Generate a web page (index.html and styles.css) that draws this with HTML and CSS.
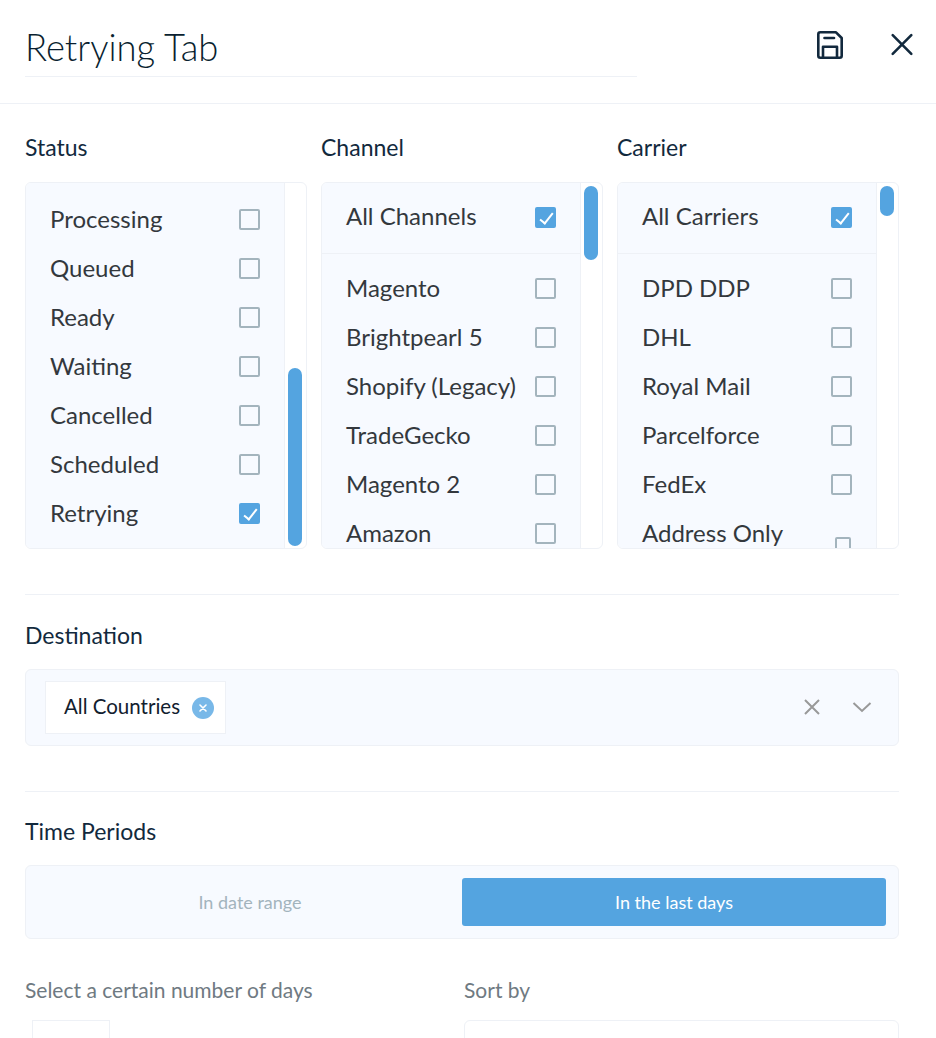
FILE: index.html
```html
<!DOCTYPE html>
<html lang="en">
<head>
<meta charset="UTF-8">
<meta name="viewport" content="width=device-width, initial-scale=1.0">
<title>Retrying Tab</title>
<link rel="stylesheet" href="styles.css">
</head>
<body>
<!-- Title bar -->
<header class="top-bar">
    <div class="title-field">Retrying Tab</div>
    <button class="icon-button save-button" aria-label="Save">
        <svg width="32" height="32" viewBox="0 0 32 32" fill="none" stroke="#12293d" stroke-width="2.6" stroke-linejoin="round" stroke-linecap="round">
            <path d="M4.300 5.300a2 2 0 0 1 2-2h15.700l5.700 5.700v17.700a2 2 0 0 1-2 2h-19.400a2 2 0 0 1-2-2z"/>
            <path d="M9 28.700v-11h14v11"/>
            <path d="M10.500 9h9.500"/>
        </svg>
    </button>
    <button class="icon-button close-button" aria-label="Close">
        <svg width="24" height="24" viewBox="0 0 24 24" fill="none" stroke="#12293d" stroke-width="2.600" stroke-linecap="round">
            <path d="M2.700 2.200l18.600 18.600M21.300 2.200l-18.600 18.600"/>
        </svg>
    </button>
</header>

<main class="content">
    <!-- Three filter lists -->
    <section class="filters">
        <div class="filter">
            <h2 class="label">Status</h2>
            <div class="list-box">
                <div class="list plain">
                    <div class="row"><span>Processing</span><i class="check"></i></div>
                    <div class="row"><span>Queued</span><i class="check"></i></div>
                    <div class="row"><span>Ready</span><i class="check"></i></div>
                    <div class="row"><span>Waiting</span><i class="check"></i></div>
                    <div class="row"><span>Cancelled</span><i class="check"></i></div>
                    <div class="row"><span>Scheduled</span><i class="check"></i></div>
                    <div class="row"><span>Retrying</span><i class="check on"></i></div>
                </div>
                <div class="track"><div class="thumb thumb-status"></div></div>
            </div>
        </div>
        <div class="filter">
            <h2 class="label">Channel</h2>
            <div class="list-box">
                <div class="list">
                    <div class="row all-row"><span>All Channels</span><i class="check on"></i></div>
                    <div class="row-group">
                        <div class="row"><span>Magento</span><i class="check"></i></div>
                        <div class="row"><span>Brightpearl 5</span><i class="check"></i></div>
                        <div class="row"><span>Shopify (Legacy)</span><i class="check"></i></div>
                        <div class="row"><span>TradeGecko</span><i class="check"></i></div>
                        <div class="row"><span>Magento 2</span><i class="check"></i></div>
                        <div class="row"><span>Amazon</span><i class="check"></i></div>
                    </div>
                </div>
                <div class="track"><div class="thumb thumb-channel"></div></div>
            </div>
        </div>
        <div class="filter">
            <h2 class="label">Carrier</h2>
            <div class="list-box">
                <div class="list">
                    <div class="row all-row"><span>All Carriers</span><i class="check on"></i></div>
                    <div class="row-group">
                        <div class="row"><span>DPD DDP</span><i class="check"></i></div>
                        <div class="row"><span>DHL</span><i class="check"></i></div>
                        <div class="row"><span>Royal Mail</span><i class="check"></i></div>
                        <div class="row"><span>Parcelforce</span><i class="check"></i></div>
                        <div class="row"><span>FedEx</span><i class="check"></i></div>
                        <div class="row"><span>Address Only</span><i class="check small"></i></div>
                    </div>
                </div>
                <div class="track"><div class="thumb thumb-carrier"></div></div>
            </div>
        </div>
    </section>

    <!-- Destination -->
    <section class="block block-destination">
        <h2 class="label">Destination</h2>
        <div class="select-box">
            <div class="tag">
                <span class="tag-text">All Countries</span>
                <span class="tag-remove">
                    <svg width="8" height="8" viewBox="0 0 8 8" fill="none" stroke="#fff" stroke-width="1.600" stroke-linecap="round"><path d="M1 1l6 6M7 1l-6 6"/></svg>
                </span>
            </div>
            <div class="select-icons">
                <svg width="18" height="18" viewBox="0 0 18 18" fill="none" stroke="#999" stroke-width="2"><path d="M2 2l14 14M16 2l-14 14"/></svg>
                <svg width="20" height="12" viewBox="0 0 20 12" fill="none" stroke="#999" stroke-width="2"><path d="M1.500 2l8.500 8 8.500-8"/></svg>
            </div>
        </div>
    </section>

    <!-- Time periods -->
    <section class="block block-time">
        <h2 class="label">Time Periods</h2>
        <div class="toggle">
            <div class="toggle-option">In date range</div>
            <div class="toggle-option active">In the last days</div>
        </div>
        <div class="bottom-fields">
            <div class="field-days">
                <div class="field-label">Select a certain number of days</div>
                <div class="days-input"></div>
            </div>
            <div class="field-sort">
                <div class="field-label">Sort by</div>
                <div class="sort-input"></div>
            </div>
        </div>
    </section>
</main>
</body>
</html>
```

FILE: styles.css
```css
/* Page */
html, body {
    height: 1038px;
    overflow: hidden;
}
body {
    background-color: #fff;
    color: #12293d;
    font-family: "Lato", "Open Sans", sans-serif;
    margin: 0;
    padding: 0;
}
/* Title bar */
.top-bar {
    height: 103px;
    border-bottom: 1px solid #eef1f6;
    display: flex;
    align-items: flex-start;
    padding-left: 25px;
}
.title-field {
    width: 612px;
    height: 76px;
    box-sizing: content-box;
    border-bottom: 1px solid #eef1f6;
    font-size: 36.4px;
    font-weight: 300;
    line-height: 94px;
    color: #0a1f30;
}
.icon-button {
    background: none;
    border: none;
    padding: 0;
    cursor: pointer;
    display: block;
}
.save-button {
    margin: 29px 0 0 177px;
    height: 32px;
}
.close-button {
    margin: 33px 0 0 44px;
    height: 24px;
}
/* Content */
.content {
    padding: 0 37px 0 25px;
}
.label {
    margin: 0;
    font-size: 23px;
    font-weight: 400;
    line-height: 28px;
    color: #12293d;
}
.filters {
    display: grid;
    grid-template-columns: repeat(3, 282px);
    column-gap: 14px;
    padding-top: 29px;
    padding-bottom: 45px;
    border-bottom: 1px solid #eef1f6;
}
.list-box {
    margin-top: 21px;
    height: 365px;
    border: 1px solid #eef1f6;
    border-radius: 6px;
    overflow: hidden;
    display: flex;
}
.list {
    flex: 1;
    min-width: 0;
    background-color: #f7faff;
    border-right: 1px solid #eef1f6;
}
.list.plain {
    padding-top: 13px;
}
.row {
    height: 49px;
    padding: 0 24px;
    display: flex;
    align-items: center;
    justify-content: space-between;
    font-size: 24px;
    color: #33383d;
}
.row span {
    margin-bottom: 5px;
}
.all-row {
    height: 70px;
    border-bottom: 1px solid #eef1f6;
}
.row-group {
    padding-top: 11px;
}
/* Checkboxes */
.check {
    width: 21px;
    height: 21px;
    margin-bottom: 2px;
    box-sizing: border-box;
    border: 2px solid #a3b4bd;
    border-radius: 2px;
    flex-shrink: 0;
    position: relative;
}
.check.on {
    background-color: #54a4e0;
    border-color: #54a4e0;
}
.check.on::after {
    content: "";
    position: absolute;
    left: 6px;
    top: 1px;
    width: 5px;
    height: 12px;
    border: solid #fff;
    border-width: 0 2px 2px 0;
    transform: rotate(38deg);
}
.check.small {
    width: 16px;
    height: 16px;
    margin: 21px 0 0 0;
    position: relative;
    left: -1px;
}
/* Scrollbar */
.track {
    width: 21px;
    flex-shrink: 0;
    padding: 3px 4px 0 3px;
    box-sizing: border-box;
}
.thumb {
    background-color: #54a4e0;
    border-radius: 8px;
}
.thumb-status {
    height: 178px;
    margin-top: 182px;
}
.thumb-channel {
    height: 74px;
}
.thumb-carrier {
    height: 30px;
}
/* Destination and time */
.block-destination {
    padding-top: 26px;
    padding-bottom: 45px;
    border-bottom: 1px solid #eef1f6;
}
.select-box {
    margin-top: 20px;
    height: 77px;
    box-sizing: border-box;
    background-color: #f7faff;
    border: 1px solid #eef1f6;
    border-radius: 6px;
    display: flex;
    align-items: center;
    justify-content: space-between;
    padding: 0 26px 0 19px;
}
.tag {
    width: 181px;
    height: 53px;
    box-sizing: border-box;
    background-color: #fff;
    border: 1px solid #eef1f6;
    display: flex;
    align-items: center;
    padding-left: 18px;
    font-size: 20.5px;
    color: #12202e;
}
.tag-text {
    margin-bottom: 4px;
}
.tag-remove {
    width: 22px;
    height: 22px;
    margin-left: 12px;
    border-radius: 50%;
    background-color: #78b8e8;
    display: flex;
    align-items: center;
    justify-content: center;
}
.select-icons {
    display: flex;
    align-items: center;
    gap: 31px;
    margin-bottom: 1px;
}
.block-time {
    padding-top: 25px;
}
.toggle {
    margin-top: 20px;
    height: 74px;
    box-sizing: border-box;
    background-color: #f7faff;
    border: 1px solid #eef1f6;
    border-radius: 6px;
    padding: 12px;
    display: grid;
    grid-template-columns: 424px 424px;
}
.toggle-option {
    display: flex;
    align-items: center;
    justify-content: center;
    font-size: 18px;
    color: #a3b4bd;
    border-radius: 3px;
}
.toggle-option.active {
    background-color: #54a4e0;
    color: #fff;
}
.bottom-fields {
    display: flex;
    margin-top: 36px;
}
.field-days {
    width: 439px;
}
.field-sort {
    flex: 1;
}
.field-label {
    font-size: 21px;
    line-height: 30px;
    color: #6f7a82;
}
.days-input {
    margin: 15px 0 0 7px;
    width: 78px;
    height: 60px;
    box-sizing: border-box;
    border: 1px solid #eef1f6;
}
.sort-input {
    margin-top: 15px;
    height: 60px;
    box-sizing: border-box;
    border: 1px solid #eef1f6;
    border-radius: 6px;
}
```
